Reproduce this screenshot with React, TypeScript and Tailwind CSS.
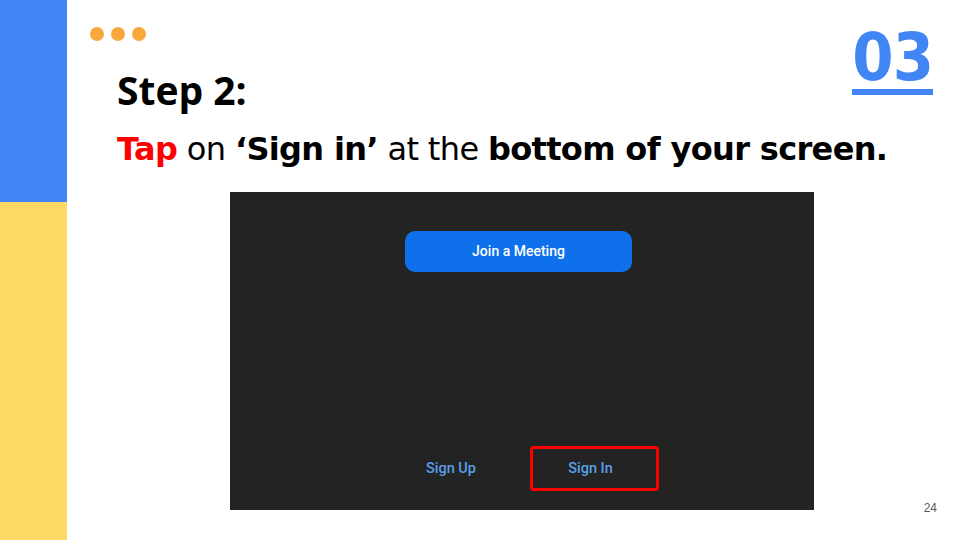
import React from "react";

export default function App() {
  return (
    <div className="w-[960px] h-[540px] bg-white flex overflow-hidden relative">
      <div className="w-[67px] h-full flex flex-col shrink-0">
        <div className="h-[202px] bg-[#4285f4]" />
        <div className="flex-1 bg-[#ffd966]" />
      </div>
      <div className="flex-1 flex flex-col relative">
        <div className="flex gap-[7px] ml-[23px] mt-[27px]">
          <div className="w-[14px] h-[14px] rounded-full bg-[#f9a83d]" />
          <div className="w-[14px] h-[14px] rounded-full bg-[#f9a83d]" />
          <div className="w-[14px] h-[14px] rounded-full bg-[#f9a83d]" />
        </div>
        <div
          className="ml-[50px] mt-[25px] text-[39px] leading-[48px] font-bold text-black"
          style={{ fontFamily: '"Open Sans", "DejaVu Sans", sans-serif' }}
        >
          Step 2:
        </div>
        <div
          className="ml-[50px] mt-[15px] text-[32px] leading-[40px] text-black whitespace-nowrap"
          style={{ fontFamily: '"DejaVu Sans", Verdana, sans-serif', letterSpacing: "-0.65px" }}
        >
          <span className="font-bold text-[#ff0000]">Tap</span> on{" "}
          <span className="font-bold">‘Sign in’</span> at the{" "}
          <span className="font-bold">bottom of your screen.</span>
        </div>
        <div className="ml-[163px] mt-[23px] w-[584px] h-[318px] bg-[#232323] flex flex-col">
          <div
            className="mt-[39px] ml-[175px] w-[227px] h-[41px] rounded-[10px] bg-[#0e71eb] flex items-center justify-center text-white text-[14px] font-medium"
            style={{ fontFamily: "Roboto, Inter, sans-serif" }}
          >
            Join a Meeting
          </div>
          <div
            className="mt-auto mb-[19px] ml-[196px] flex items-center text-[14.5px] font-medium text-[#5a9fe8]"
            style={{ fontFamily: "Roboto, Inter, sans-serif" }}
          >
            <div className="w-[50px] whitespace-nowrap">Sign Up</div>
            <div className="ml-[54px] w-[129px] h-[45px] border-[3px] border-[#ff0000] rounded-[4px] flex items-center justify-center pr-[8px]">
              Sign In
            </div>
          </div>
        </div>
        <div className="absolute right-[27px] top-[27px] flex flex-col items-end">
          <div
            className="text-[66px] leading-[62px] font-bold text-[#4285f4] border-b-[6px] border-[#4285f4] pb-[0px]"
            style={{ fontFamily: '"DejaVu Sans Condensed", "DejaVu Sans", Verdana, sans-serif', fontStretch: "condensed", letterSpacing: "-1px" }}
          >
            03
          </div>
        </div>
        <div
          className="absolute right-[23px] bottom-[23px] text-[12px] text-[#595959]"
          style={{ fontFamily: '"Liberation Sans", Arial, sans-serif' }}
        >
          24
        </div>
      </div>
    </div>
  );
}
